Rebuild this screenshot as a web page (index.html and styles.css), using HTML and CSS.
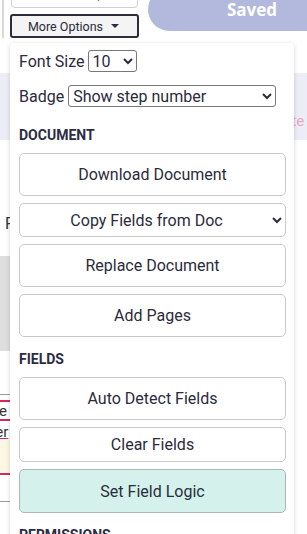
FILE: index.html
```html
<!DOCTYPE html>
<html lang="en">
<head>
  <meta charset="UTF-8">
  <meta name="viewport" content="width=device-width, initial-scale=1.0">
  <title>Document Editor</title>
  <link rel="stylesheet" href="styles.css">
</head>
<body>

  <div class="page">
    <div class="topbar">
      <div class="group-col">
        <input class="group-input" type="text" placeholder="Choose Group">
        <button class="more-btn">More Options <span class="caret"></span></button>
      </div>
      <button class="saved-btn">Saved</button>
    </div>

    <div class="band"><span class="band-text">Delete</span></div>

    <div class="side-f">F</div>
    <div class="side-block"></div>

    <div class="side-rows">
      <div class="line-gray"></div>
      <div class="field-row red">Name</div>
      <div class="field-row link">Signer</div>
      <div class="field-note"></div>
      <div class="line-gray bottom"></div>
    </div>
  </div>

  <div class="menu">
    <div class="options">
      <div class="opt-row">
        <label>Font Size</label>
        <select class="sel-size">
          <option>10</option>
          <option>12</option>
          <option>14</option>
        </select>
      </div>
      <div class="opt-row">
        <label>Badge</label>
        <select class="sel-badge">
          <option>Show step number</option>
          <option>Show signer name</option>
        </select>
      </div>
    </div>

    <div class="menu-heading">Document</div>
    <div class="btn-stack">
      <button class="menu-btn">Download Document</button>
      <select class="menu-btn sel-btn">
        <option>Copy Fields from Doc</option>
      </select>
      <button class="menu-btn">Replace Document</button>
      <button class="menu-btn">Add Pages</button>
    </div>

    <div class="menu-heading">Fields</div>
    <div class="btn-stack">
      <button class="menu-btn">Auto Detect Fields</button>
      <button class="menu-btn short">Clear Fields</button>
      <button class="menu-btn logic">Set Field Logic</button>
    </div>

    <div class="menu-heading">Permissions</div>
  </div>

</body>
</html>
```

FILE: styles.css
```css
* {
  box-sizing: border-box;
}

html, body {
  margin: 0;
  width: 307px;
  height: 534px;
  overflow: hidden;
}

body {
  font-family: Roboto, "Liberation Sans", sans-serif;
  background: #fff;
  color: #2b2b3d;
  position: relative;
}

/* page behind the menu */
.topbar {
  display: flex;
  align-items: flex-start;
  height: 38px;
}

.group-col {
  margin-left: 2px;
  border-left: 2px solid #d9d9d9;
  padding-left: 6px;
  height: 38px;
  width: 139px;
}

.group-input {
  display: block;
  width: 127px;
  height: 30px;
  margin: -22px 0 0 1px;
  border: 1px solid #cfcfcf;
  border-radius: 4px;
  font: 13px Roboto, sans-serif;
  padding: 0 10px;
}

.more-btn {
  display: flex;
  align-items: center;
  justify-content: center;
  gap: 8px;
  width: 129px;
  height: 24px;
  margin-top: 6px;
  border: 2px solid #2d2d3d;
  border-radius: 3px;
  background: #f4f4f4;
  font: 12.5px Roboto, sans-serif;
  color: #2b2b3d;
  padding: 0 2px 0 0;
}

.caret {
  width: 0;
  height: 0;
  border-left: 4px solid transparent;
  border-right: 4px solid transparent;
  border-top: 4px solid #2b2b3d;
}

.saved-btn {
  flex: none;
  width: 208px;
  height: 43px;
  margin: -12px 0 0 9px;
  border: none;
  border-radius: 22px;
  background: #b3b9dd;
  color: #fff;
  font: 700 17px "Open Sans", sans-serif;
}

.band {
  margin-top: 35px;
  height: 67px;
  background: #ededf8;
  padding: 38px 0 0 262px;
}

.band-text {
  font-size: 15px;
  color: #eaa9c9;
}

.side-f {
  margin-top: 76px;
  padding-left: 5px;
  font-size: 16px;
  line-height: 16px;
  color: #333;
}

.side-block {
  margin-top: 24px;
  width: 150px;
  height: 95px;
  background: #dedede;
}

.side-rows {
  margin-top: 43px;
  width: 150px;
}

.line-gray {
  height: 1px;
  background: #9a9a9a;
}

.line-gray.bottom {
  margin-top: 26px;
}

.field-row {
  font-size: 15px;
  color: #333;
  white-space: nowrap;
}

.field-row.red {
  margin-top: 5px;
  height: 21px;
  line-height: 18px;
  text-indent: -33px;
  border-top: 2px solid #d22a5c;
  border-bottom: 2px solid #d22a5c;
}

.field-row.link {
  height: 19px;
  line-height: 22px;
  text-indent: -34px;
  text-decoration: underline;
  text-decoration-color: #d22a5c;
}

.field-note {
  height: 35px;
  background: #fcf6e4;
  border-bottom: 2px solid #d22a5c;
}

/* options menu lying over the page */
.menu {
  position: absolute;
  top: 43px;
  left: 10px;
  width: 284px;
  height: 520px;
  padding: 7px 8px 0 9px;
  background: #fff;
  border-radius: 4px;
  box-shadow: 0 1px 4px rgba(0, 0, 0, 0.18);
}

.options {
  padding-bottom: 6px;
}

.opt-row {
  display: flex;
  align-items: center;
  gap: 3px;
  height: 22px;
  font-size: 16px;
  color: #2b2b3d;
}

.opt-row + .opt-row {
  margin-top: 13px;
}

.opt-row select {
  height: 22px;
  font: 16px Roboto, sans-serif;
  color: #2b2b3d;
  background: #fff;
  border: 1px solid #777;
  border-radius: 3px;
}

.sel-size {
  width: 49px;
}

.sel-badge {
  width: 208px;
  margin-left: 1px;
}

.menu-heading {
  margin: 14px 0 10px;
  font-size: 14px;
  line-height: 16px;
  font-weight: 700;
  text-transform: uppercase;
  color: #2c2c44;
}

.btn-stack {
  display: flex;
  flex-direction: column;
  gap: 7px;
}

.menu-btn {
  display: block;
  width: 100%;
  height: 43px;
  border: 1px solid #cacaca;
  border-radius: 5px;
  background: #fff;
  font: 16px Roboto, sans-serif;
  color: #2b2b3d;
}

.menu-btn.short {
  height: 35px;
}

.sel-btn {
  height: 34px;
  text-align: center;
  text-align-last: center;
}

.menu-btn.logic {
  height: 44px;
  background: #d4f2eb;
  border-color: #abb8b4;
}
```
